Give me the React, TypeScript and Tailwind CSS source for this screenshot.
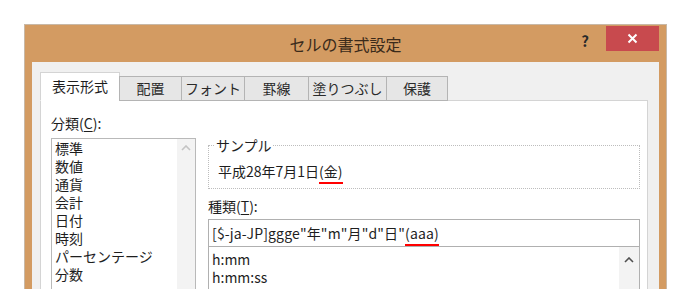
import React from "react";

const font = { fontFamily: '"Noto Sans CJK JP", "Noto Sans", sans-serif' };

const categories = ["標準", "数値", "通貨", "会計", "日付", "時刻", "パーセンテージ", "分数"];

const tabs = [
  { label: "配置", w: "w-[63px]" },
  { label: "フォント", w: "w-[64px]" },
  { label: "罫線", w: "w-[65px]" },
  { label: "塗りつぶし", w: "w-[79px]" },
  { label: "保護", w: "w-[62px]" },
];

function Marked({ children }: { children: React.ReactNode }) {
  return (
    <span className="relative">
      {children}
      <span className="absolute left-0 right-0 -bottom-[3px] h-[2px] bg-[#ff0000]" />
    </span>
  );
}

function UpArrow({ dark }: { dark?: boolean }) {
  return (
    <svg width="10" height="6" viewBox="0 0 10 6">
      <path d="M1 5 L5 1 L9 5" fill="none" stroke={dark ? "#505050" : "#c4c4c4"} strokeWidth="1.6" />
    </svg>
  );
}

export default function App() {
  return (
    <div className="w-[698px] h-[289px] overflow-hidden bg-white pl-[24px] pt-[24px] text-[#1e1e1e]" style={font}>
      <div className="w-[643px] border border-[#c8b8a6] bg-[#d39b62] px-[7px]">
        {/* Title bar */}
        <div className="relative h-[37px] flex items-center justify-center">
          <span className="text-[16px] text-[#3a2a1a] pt-[1px]">セルの書式設定</span>
          <span className="absolute right-[70px] top-[5px] text-[15px] font-bold text-[#2a2a2a]">?</span>
          <div className="absolute right-[0px] top-[1px] w-[53px] h-[25px] bg-[#c84a4e] flex items-center justify-center">
            <svg width="11" height="11" viewBox="0 0 11 11">
              <path d="M1.5 1.5 L9.5 9.5 M9.5 1.5 L1.5 9.5" stroke="#fff" strokeWidth="2" />
            </svg>
          </div>
        </div>

        {/* Content */}
        <div className="bg-[#f0f0f0] pl-[8px] pr-[10px] pt-[10px] h-[240px]">
          {/* Tabs */}
          <div className="flex items-end h-[29px] relative z-10 -mb-px">
            <div className="w-[80px] h-[29px] bg-white border border-[#d4d4d4] border-b-white flex items-center justify-center text-[14px]">
              表示形式
            </div>
            {tabs.map((t) => (
              <div
                key={t.label}
                className={`${t.w} h-[25px] -ml-px bg-[#e6e6e6] border border-[#b4b4b4] flex items-center justify-center text-[14px] text-[#2a2a2a]`}
              >
                {t.label}
              </div>
            ))}
          </div>

          {/* Panel */}
          <div className="w-[608px] h-[200px] bg-white border border-[#d4d4d4] flex pl-[10px] pt-[12px] gap-[12px]">
            {/* Left column */}
            <div className="w-[145px] flex flex-col">
              <div className="text-[14px] leading-[20px] h-[25px]">
                分類(<span className="underline underline-offset-2">C</span>):
              </div>
              <div className="flex-1 border border-[#b9b9b9] flex">
                <div className="flex-1 pl-[3px] flex flex-col">
                  {categories.map((c) => (
                    <div key={c} className="text-[14px] leading-[18px] h-[18px]">
                      {c}
                    </div>
                  ))}
                </div>
                <div className="w-[18px] bg-[#f3f3f3] flex justify-center pt-[6px]">
                  <UpArrow />
                </div>
              </div>
            </div>

            {/* Right column */}
            <div className="w-[432px] flex flex-col pt-[32px]">
              <div className="relative border border-dotted border-[#bdbdbd] h-[44px] flex items-center pl-[9px]">
                <span className="absolute left-[6px] -top-[11px] bg-white px-[1px] text-[14px] leading-[20px]">サンプル</span>
                <span className="text-[14px] leading-[20px] pt-[8px]">
                  平成28年7月1日<Marked>(金)</Marked>
                </span>
              </div>
              <div className="text-[14px] leading-[20px] mt-[7px] h-[23px]">
                種類(<span className="underline underline-offset-2">T</span>):
              </div>
              <div className="h-[28px] border border-[#b0b0b0] flex items-center pl-[3px] text-[14px] tracking-[0.15px]">
                <span>
                  [$-ja-JP]ggge"年"m"月"d"日"<Marked>(aaa)</Marked>
                </span>
              </div>
              <div className="flex-1 -mt-px border border-[#b0b0b0] flex">
                <div className="flex-1 pl-[3px] pt-[3px] flex flex-col">
                  <div className="text-[14px] leading-[18px]">h:mm</div>
                  <div className="text-[14px] leading-[18px]">h:mm:ss</div>
                </div>
                <div className="w-[20px] bg-[#f3f3f3] flex justify-center pt-[10px]">
                  <UpArrow dark />
                </div>
              </div>
            </div>
          </div>
        </div>
      </div>
    </div>
  );
}
